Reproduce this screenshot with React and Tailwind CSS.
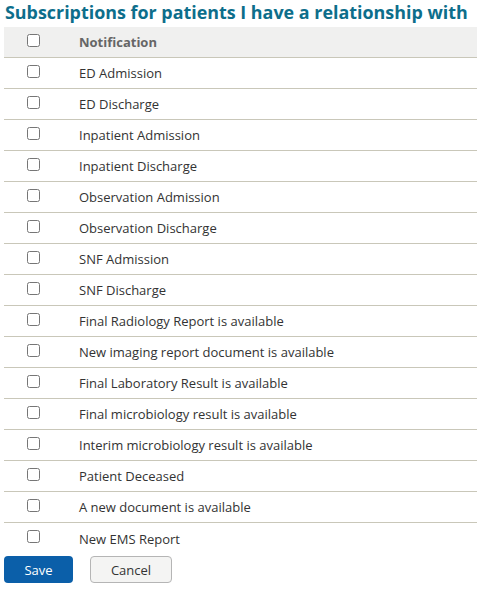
import React from "react";

const items = [
  "ED Admission",
  "ED Discharge",
  "Inpatient Admission",
  "Inpatient Discharge",
  "Observation Admission",
  "Observation Discharge",
  "SNF Admission",
  "SNF Discharge",
  "Final Radiology Report is available",
  "New imaging report document is available",
  "Final Laboratory Result is available",
  "Final microbiology result is available",
  "Interim microbiology result is available",
  "Patient Deceased",
  "A new document is available",
  "New EMS Report",
];

export default function App() {
  return (
    <div className="w-[477px] h-[589px] bg-white text-[13px] text-[#333] overflow-hidden" style={{ fontFamily: '"Open Sans", sans-serif' }}>
      <h1 className="pl-[5px] h-[27px] text-[17.9px] font-bold leading-[24px] text-[#0d6e8b] whitespace-nowrap">
        Subscriptions for patients I have a relationship with
      </h1>
      <div className="ml-[4px]">
        <div className="flex items-center h-[31px] bg-[#f0f0ef] border-b border-[#c9c7b9]">
          <div className="w-[75px] flex pl-[20px] -mt-[4px]">
            <input type="checkbox" className="m-[3px]" />
          </div>
          <div className="font-bold text-[#666] pt-[2px]">Notification</div>
        </div>
        {items.map((t, i) => (
          <div
            key={t}
            className={`flex items-center h-[31px] ${i < items.length - 1 ? "border-b border-[#c9c7b9]" : ""}`}
          >
            <div className="w-[75px] flex pl-[20px] -mt-[4px]">
              <input type="checkbox" className="m-[3px]" />
            </div>
            <div className="pt-[2px]">{t}</div>
          </div>
        ))}
      </div>
      <div className="flex gap-[17px] ml-[4px] mt-[2px]">
        <button className="w-[69px] h-[27px] rounded-[4px] bg-[#0b5fa9] text-white text-[13px] pt-[2px]">Save</button>
        <button className="w-[82px] h-[27px] rounded-[4px] bg-[#f4f4f3] border border-[#b5b5b5] text-[#333] text-[13px] pt-[2px]">Cancel</button>
      </div>
    </div>
  );
}
